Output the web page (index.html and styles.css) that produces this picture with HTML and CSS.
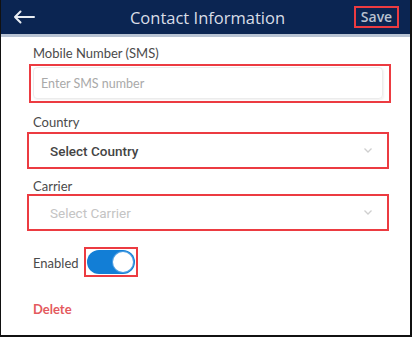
FILE: index.html
```html
<!DOCTYPE html>
<html lang="en">
<head>
  <meta charset="UTF-8" />
  <meta name="viewport" content="width=device-width, initial-scale=1.0" />
  <title>Contact Information</title>
  <link rel="stylesheet" href="styles.css">
</head>
<body>
  <div class="frame">
    <header class="topbar">
      <svg class="back" viewBox="0 0 22 14" fill="none" stroke="currentColor" stroke-width="2" stroke-linecap="round" stroke-linejoin="round">
        <path d="M21 7H2M7.5 1.5L2 7l5.5 5.5" />
      </svg>
      <h1>Contact Information</h1>
      <span class="mark save">Save</span>
    </header>

    <main class="form">
      <label class="field-label">Mobile Number (SMS)</label>
      <div class="mark mark-input">
        <div class="input">Enter SMS number</div>
      </div>

      <label class="field-label gap-country">Country</label>
      <div class="mark mark-select">
        <span class="select-text">Select Country</span>
        <svg class="chevron" viewBox="0 0 8 5" fill="none" stroke="currentColor" stroke-width="1.3"><path d="M0.5 0.5L4 4l3.5-3.5" /></svg>
      </div>

      <label class="field-label gap-carrier">Carrier</label>
      <div class="mark mark-select">
        <span class="select-text muted">Select Carrier</span>
        <svg class="chevron" viewBox="0 0 8 5" fill="none" stroke="currentColor" stroke-width="1.3"><path d="M0.5 0.5L4 4l3.5-3.5" /></svg>
      </div>

      <div class="toggle-row">
        <span class="toggle-label">Enabled</span>
        <span class="mark mark-toggle">
          <span class="toggle"><span class="knob"></span></span>
        </span>
      </div>

      <div class="delete">Delete</div>
    </main>
  </div>
</body>
</html>
```

FILE: styles.css
```css
body {
  margin: 0;
  background: #fff;
  font-family: 'Lato', 'Open Sans', sans-serif;
}

.frame {
  width: 412px;
  height: 337px;
  box-sizing: border-box;
  border-left: 1px solid #111;
  border-right: 2px solid #111;
  border-bottom: 2px solid #111;
  overflow: hidden;
  background: #fff;
}

/* top bar */
.topbar {
  height: 34px;
  background: #0b2552;
  border-bottom: 3px solid #b8c3d3;
  display: flex;
  align-items: center;
  padding: 0 11px 0 12px;
}

.back {
  width: 22px;
  height: 14px;
  color: #e9edf3;
}

.topbar h1 {
  flex: 1;
  margin: 0;
  text-align: center;
  font-family: 'Open Sans', sans-serif;
  font-weight: 400;
  font-size: 16.5px;
  color: #d9dee7;
  padding-left: 26px;
}

.mark {
  border: 2px solid #ec3b41;
  box-sizing: border-box;
}

.save {
  width: 45px;
  height: 22px;
  display: flex;
  align-items: center;
  justify-content: center;
  font-family: 'Open Sans', sans-serif;
  font-weight: 600;
  font-size: 14px;
  color: #b9c1cf;
  margin-top: -1px;
}

/* form */
.form {
  padding: 8px 0 0 26px;
}

.field-label {
  display: block;
  padding-left: 6px;
  font-size: 13px;
  line-height: 16px;
  color: #4a4a4a;
}

.gap-country {
  margin-top: 11px;
  margin-bottom: 2px;
}

.gap-carrier {
  margin-top: 9px;
}

.mark-input {
  width: 362px;
  height: 39px;
  margin: 3px 0 0 2px;
  padding: 1px 6px 2px 2px;
}

.input {
  height: 100%;
  box-sizing: border-box;
  border: 1px solid #ececec;
  border-radius: 4px;
  box-shadow: 1px 1px 2px rgba(0, 0, 0, 0.06);
  display: flex;
  align-items: center;
  padding-left: 7px;
  font-size: 12.5px;
  color: #a9a9a9;
}

.mark-select {
  width: 362px;
  height: 37px;
  display: flex;
  align-items: center;
  padding: 0 15px 0 21px;
}

.select-text {
  flex: 1;
  font-family: 'Roboto', sans-serif;
  font-weight: 500;
  font-size: 13.5px;
  color: #444;
}

.select-text.muted {
  font-weight: 400;
  color: #c4c4c4;
}

.chevron {
  width: 8px;
  height: 5px;
  color: #cfcfcf;
}

/* toggle */
.toggle-row {
  display: flex;
  align-items: center;
  margin-top: 16px;
  padding-left: 6px;
}

.toggle-label {
  font-size: 13px;
  color: #4a4a4a;
  margin-right: 5px;
  margin-top: 2px;
}

.mark-toggle {
  width: 54px;
  height: 30px;
  display: flex;
  align-items: center;
  justify-content: center;
}

.toggle {
  width: 48px;
  height: 24px;
  border-radius: 12px;
  background: #127ed6;
  display: flex;
  align-items: center;
  justify-content: flex-end;
  padding: 0 2px;
  box-sizing: border-box;
}

.knob {
  width: 20px;
  height: 20px;
  border-radius: 50%;
  background: #fff;
  box-shadow: 0 0 0 1px #4d9fe3;
}

.delete {
  margin-top: 24px;
  padding-left: 6px;
  font-size: 13px;
  font-weight: 700;
  color: #e45a5e;
}
```
